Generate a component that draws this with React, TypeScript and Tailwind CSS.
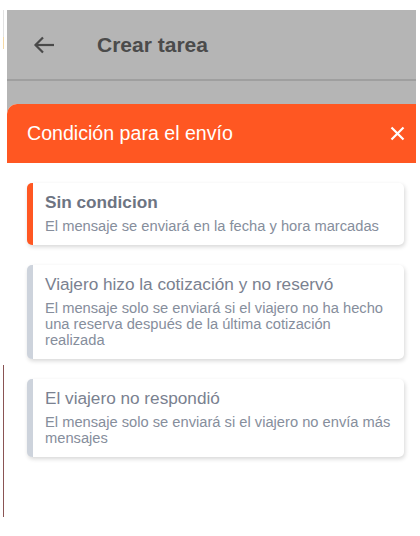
import React from "react";

type Option = {
  title: string;
  description: string;
  active?: boolean;
};

const options: Option[] = [
  {
    title: "Sin condicion",
    description: "El mensaje se enviará en la fecha y hora marcadas",
    active: true,
  },
  {
    title: "Viajero hizo la cotización y no reservó",
    description:
      "El mensaje solo se enviará si el viajero no ha hecho una reserva después de la última cotización realizada",
  },
  {
    title: "El viajero no respondió",
    description:
      "El mensaje solo se enviará si el viajero no envía más mensajes",
  },
];

function ArrowLeft() {
  return (
    <svg width="21" height="18" viewBox="0 0 21 18" fill="none">
      <path d="M21 9H2.5" stroke="#4a4a4a" strokeWidth="2.2" />
      <path d="M10 1.5L2.5 9l7.5 7.5" stroke="#4a4a4a" strokeWidth="2.2" />
    </svg>
  );
}

function CloseIcon() {
  return (
    <svg width="15" height="15" viewBox="0 0 15 15" fill="none">
      <path d="M1.5 1.5l12 12M13.5 1.5l-12 12" stroke="#ffffff" strokeWidth="2.2" />
    </svg>
  );
}

function OptionCard({ option }: { option: Option }) {
  return (
    <div
      className={`rounded-[5px] bg-white shadow-[1px_2px_4px_rgba(0,0,0,0.16)] border-l-[6px] pl-[12px] pr-[11px] pt-[8px] pb-[11px] ${
        option.active ? "border-[#ff5722]" : "border-[#cdd3dc]"
      }`}
    >
      <div
        className={`text-[17.2px] leading-[22px] ${
          option.active ? "font-bold text-[#6d7482]" : "text-[#7a8190]"
        }`}
      >
        {option.title}
      </div>
      <div className="mt-[5px] text-[14.7px] leading-[16px] text-[#868e9c]">
        {option.description}
      </div>
    </div>
  );
}

export default function App() {
  return (
    <div
      className="h-[536px] w-[420px] bg-white pt-[10px] overflow-hidden"
      style={{ fontFamily: '"Liberation Sans", Arial, sans-serif' }}
    >
      <div className="flex h-[526px]">
        {/* edge of the page underneath */}
        <div className="flex w-[7px] flex-col items-center">
          <div className="h-[27px] w-[1px] bg-[#e2e2e2]" />
          <div className="h-[12px] w-[1px] bg-[#f5d9a6]" />
          <div className="h-[316px] w-[1px]" />
          <div className="h-[152px] w-[1px] bg-[#8a5454]" />
        </div>
        <div className="flex w-[409px] flex-col bg-[#b5b5b5]">
          {/* app bar */}
          <div className="flex h-[71px] items-center border-b-[2px] border-[#9f9f9f] pl-[26px]">
            <ArrowLeft />
            <span className="ml-[43px] text-[21px] font-bold text-[#4b4b4b]">
              Crear tarea
            </span>
          </div>
          {/* bottom sheet */}
          <div className="mt-[23px] flex flex-1 flex-col overflow-hidden rounded-tl-[10px] bg-white">
            <div className="flex h-[59px] shrink-0 items-center justify-between bg-[#ff5722] pl-[20px] pr-[11px]">
              <span className="text-[19.6px] text-white">
                Condición para el envío
              </span>
              <CloseIcon />
            </div>
            <div className="flex flex-col gap-[20px] pl-[20px] pr-[12px] pt-[20px]">
              {options.map((o) => (
                <OptionCard key={o.title} option={o} />
              ))}
            </div>
          </div>
        </div>
      </div>
    </div>
  );
}
